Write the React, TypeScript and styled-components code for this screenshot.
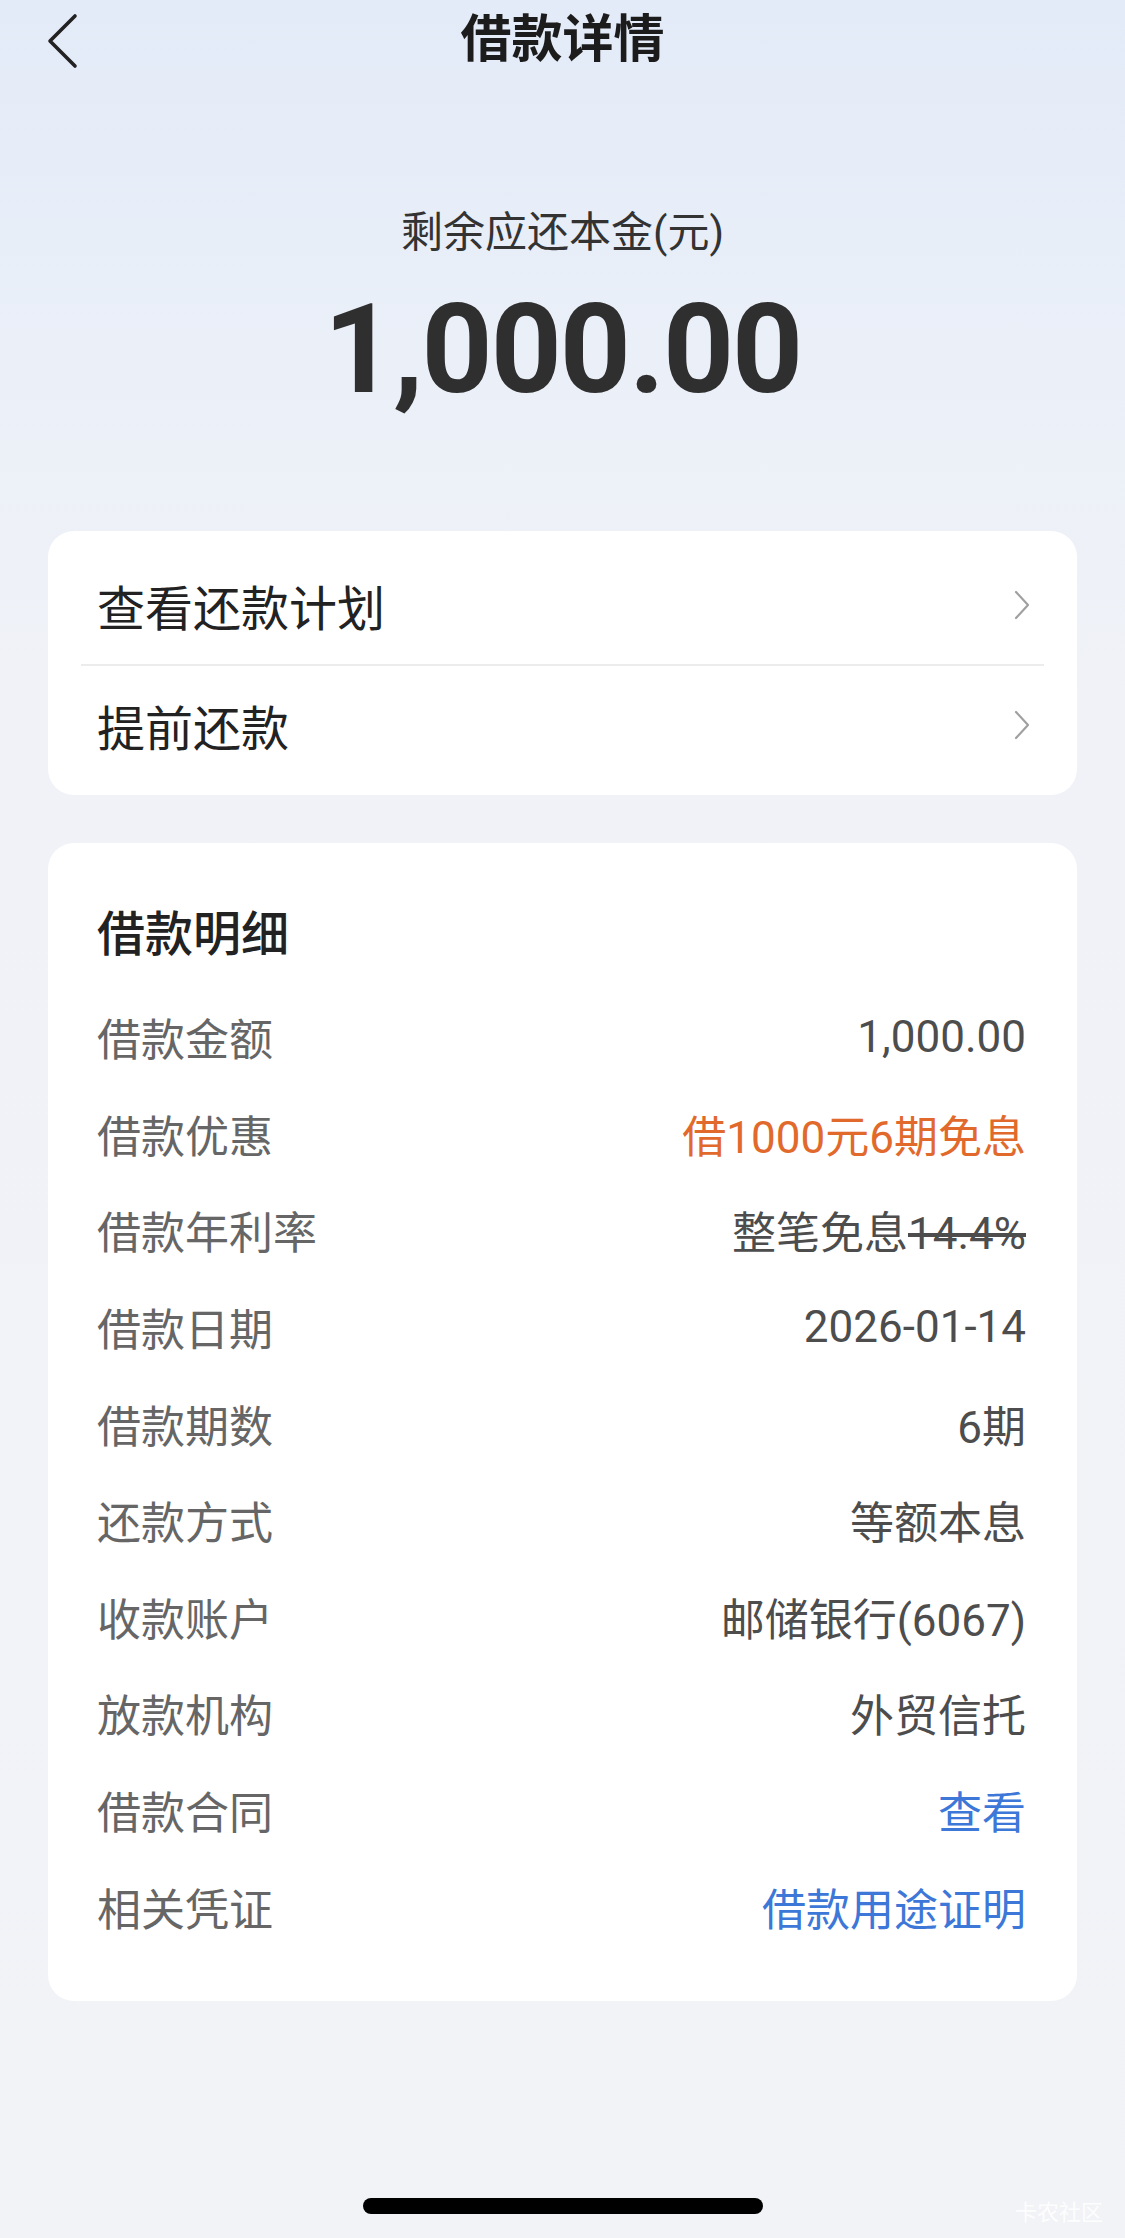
import React from 'react'
import styled, { createGlobalStyle } from 'styled-components'

const GlobalStyle = createGlobalStyle`
    html, body {
        margin: 0;
        padding: 0;
    }
    body {
        font-family: Roboto, "Noto Sans CJK SC", sans-serif;
        -webkit-font-smoothing: antialiased;
    }
`

const Page = styled.div`
    position: relative;
    width: 1125px;
    min-height: 2238px;
    display: flex;
    flex-direction: column;
    background: linear-gradient(180deg, #e3ebf8 0px, #ebf0f8 380px, #f0f2f7 700px, #f2f3f7 100%);
`

const NavBar = styled.div`
    height: 80px;
    display: grid;
    grid-template-columns: 1fr auto 1fr;
    align-items: center;
`

const BackButton = styled.div`
    padding-left: 46px;
    padding-top: 2px;
    display: flex;
    align-items: center;
`

const NavTitle = styled.h1`
    margin: 0;
    font-size: 51px;
    font-weight: 700;
    line-height: 80px;
    color: #1c1c1c;
`

const Hero = styled.div`
    display: flex;
    flex-direction: column;
    align-items: center;
    padding-top: 128px;
`

const HeroLabel = styled.div`
    font-size: 42px;
    line-height: 50px;
    color: #333;
`

const Amount = styled.div`
    margin-top: 27px;
    font-family: Roboto, sans-serif;
    font-weight: 700;
    font-size: 124px;
    line-height: 130px;
    letter-spacing: -2px;
    color: #2f2f2f;
`

const Card = styled.div<{ $gap: number }>`
    margin: ${(p) => p.$gap}px 48px 0;
    background: #fff;
    border-radius: 26px;
`

const MenuCard = styled(Card)`
    padding: 15px 0 11px;
`

const MenuRow = styled.div`
    height: 118px;
    display: flex;
    align-items: center;
    justify-content: space-between;
    padding: 0 47px 0 49px;
    font-size: 48px;
    color: #222;
`

const Divider = styled.div`
    height: 2px;
    margin: 0 33px;
    background: #ececec;
`

const DetailCard = styled(Card)`
    padding: 62px 51px 46px 49px;
`

const DetailTitle = styled.div`
    font-size: 48px;
    font-weight: 500;
    line-height: 60px;
    color: #222;
    margin-bottom: 24px;
`

const DetailRow = styled.div`
    height: 96.6px;
    display: flex;
    align-items: center;
    justify-content: space-between;
    font-size: 44px;
`

const Label = styled.span`
    color: #666;
`

const Value = styled.span<{ $tone?: 'orange' | 'blue' }>`
    color: ${(p) => (p.$tone === 'orange' ? '#e2692c' : p.$tone === 'blue' ? '#3d77d8' : '#4d4d4d')};
`

const Struck = styled.span`
    text-decoration: line-through;
`

const HomeBar = styled.div`
    align-self: center;
    width: 400px;
    height: 16px;
    margin-top: 197px;
    border-radius: 8px;
    background: #000;
`

const Watermark = styled.div`
    position: absolute;
    right: 22px;
    bottom: 12px;
    font-size: 22px;
    color: rgba(255, 255, 255, 0.9);
`

const BackIcon = () => (
    <svg width="32" height="56" viewBox="0 0 32 56">
        <polyline points="29,3 4,28 29,53" fill="none" stroke="#222" strokeWidth="3.6" strokeLinecap="round" strokeLinejoin="round" />
    </svg>
)

const ChevronIcon = () => (
    <svg width="16" height="30" viewBox="0 0 16 30">
        <polyline points="2,2 14,15 2,28" fill="none" stroke="#a0a0a0" strokeWidth="2.2" strokeLinecap="round" strokeLinejoin="round" />
    </svg>
)

const details: { label: string; value: React.ReactNode; tone?: 'orange' | 'blue' }[] = [
    { label: '借款金额', value: '1,000.00' },
    { label: '借款优惠', value: '借1000元6期免息', tone: 'orange' },
    { label: '借款年利率', value: <>整笔免息<Struck>14.4%</Struck></> },
    { label: '借款日期', value: '2026-01-14' },
    { label: '借款期数', value: '6期' },
    { label: '还款方式', value: '等额本息' },
    { label: '收款账户', value: '邮储银行(6067)' },
    { label: '放款机构', value: '外贸信托' },
    { label: '借款合同', value: '查看', tone: 'blue' },
    { label: '相关凭证', value: '借款用途证明', tone: 'blue' },
]

const App = () => {
    return (
        <Page>
            <GlobalStyle />
            <NavBar>
                <BackButton>
                    <BackIcon />
                </BackButton>
                <NavTitle>借款详情</NavTitle>
                <div />
            </NavBar>

            <Hero>
                <HeroLabel>剩余应还本金(元)</HeroLabel>
                <Amount>1,000.00</Amount>
            </Hero>

            <MenuCard $gap={116}>
                <MenuRow>
                    <span>查看还款计划</span>
                    <ChevronIcon />
                </MenuRow>
                <Divider />
                <MenuRow>
                    <span>提前还款</span>
                    <ChevronIcon />
                </MenuRow>
            </MenuCard>

            <DetailCard $gap={48}>
                <DetailTitle>借款明细</DetailTitle>
                {details.map((d) => (
                    <DetailRow key={d.label}>
                        <Label>{d.label}</Label>
                        <Value $tone={d.tone}>{d.value}</Value>
                    </DetailRow>
                ))}
            </DetailCard>

            <HomeBar />
            <Watermark>卡农社区</Watermark>
        </Page>
    )
}

export default App
